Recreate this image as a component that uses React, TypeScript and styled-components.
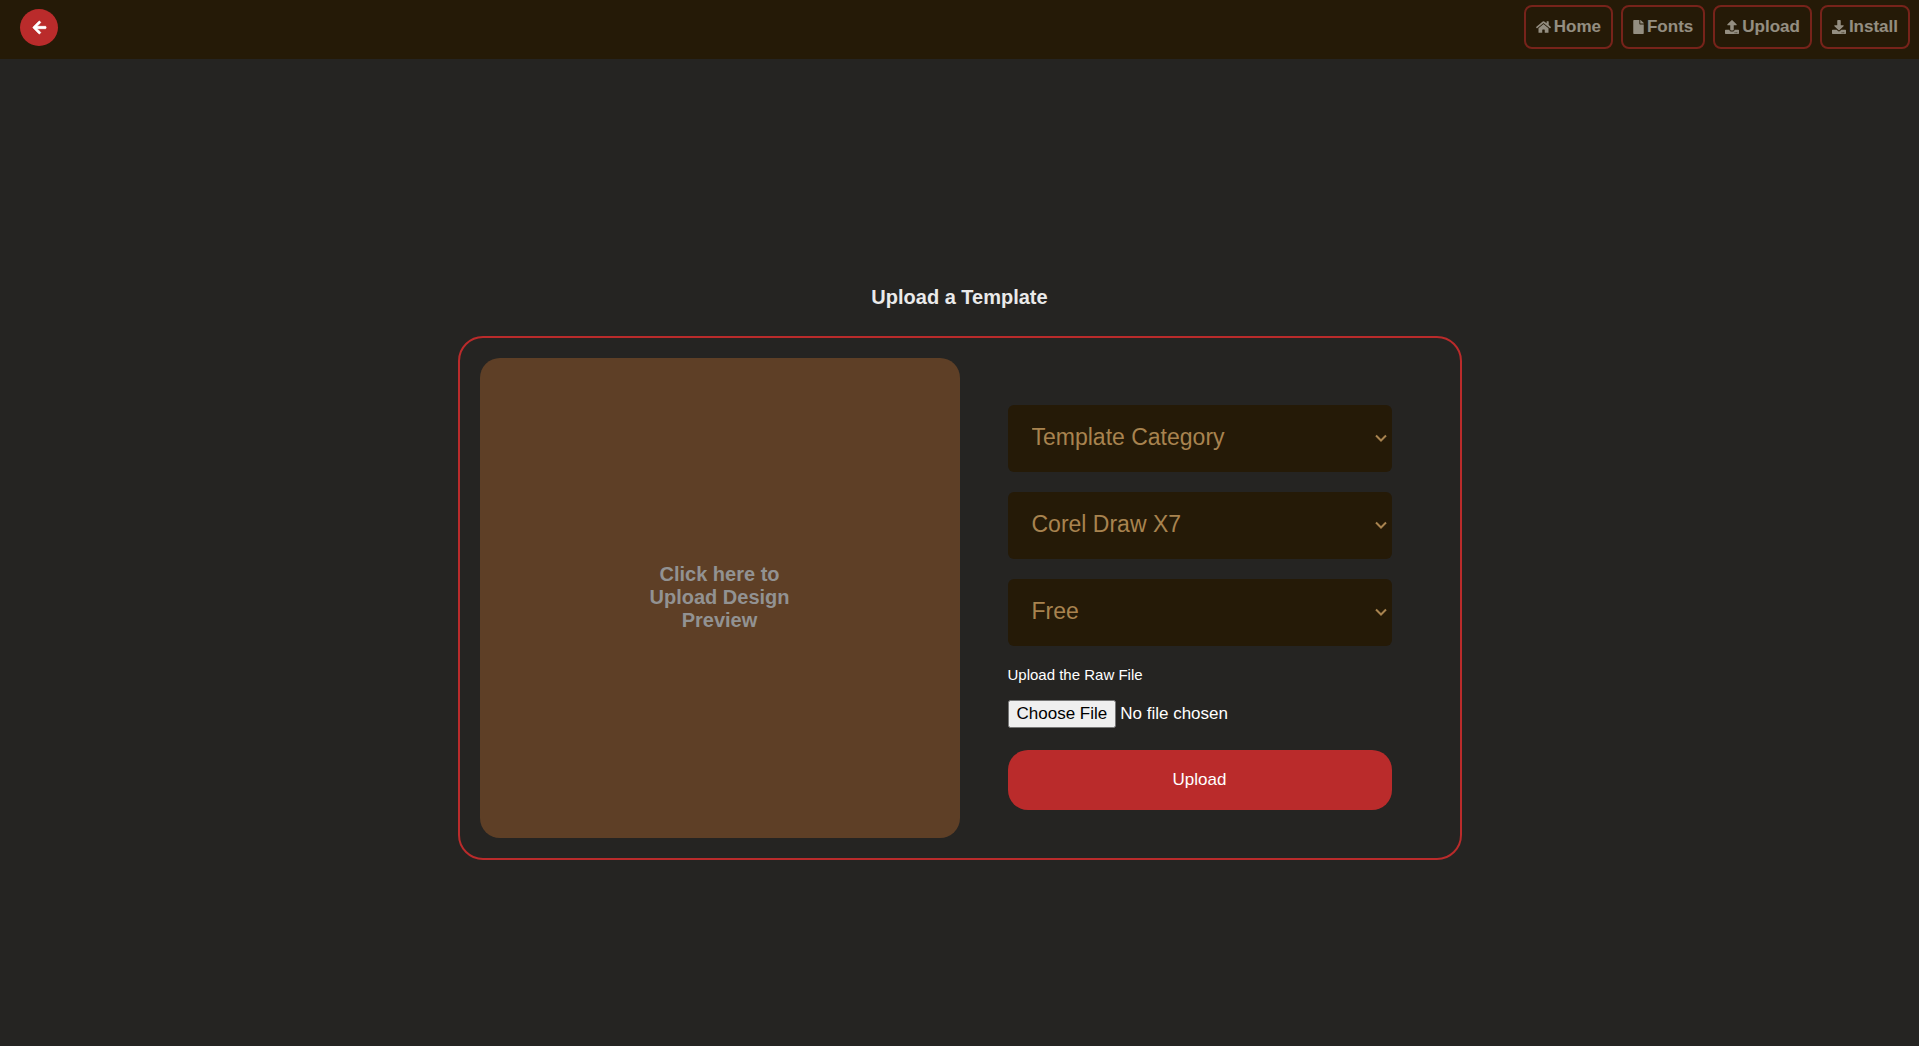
import React from 'react';
import styled, { createGlobalStyle } from 'styled-components';
import { FaArrowLeft, FaDownload, FaFile, FaHome, FaUpload } from 'react-icons/fa';

const color = {
  page: '#252422',
  dark: '#251a07',
  red: '#ba2b2b',
  brown: '#5e3f26',
  tan: '#a8834f',
};

const GlobalStyle = createGlobalStyle`
  * { box-sizing: border-box; }
  body {
    margin: 0;
    background: ${color.page};
    color: #fff;
    font-family: "Liberation Sans", Arial, sans-serif;
    font-size: 17px;
  }
  button, input, select { font-family: inherit; }
`;

const Page = styled.div`
  display: flex;
  flex-direction: column;
  min-height: 100vh;
`;

const Header = styled.header`
  display: flex;
  justify-content: space-between;
  align-items: flex-start;
  padding: 5px 9px 10px 20px;
  background: ${color.dark};
`;

const BackButton = styled.button`
  display: flex;
  align-items: center;
  justify-content: center;
  width: 38px;
  height: 37px;
  margin-top: 4px;
  padding: 0;
  border: 0;
  border-radius: 50%;
  background: ${color.red};
  color: #fff;
  font-size: 15px;
  cursor: pointer;

  svg {
    overflow: visible;
    stroke: currentColor;
    stroke-width: 24px;
  }
`;

const Nav = styled.nav`
  display: flex;
  gap: 8px;
`;

const NavLink = styled.a<{ $iconWidth: number }>`
  display: flex;
  align-items: center;
  gap: 3px;
  height: 44px;
  padding: 0 10px;
  border: 2px solid ${color.red};
  border-radius: 8px;
  color: #efede5;
  font-size: 17px;
  font-weight: bold;
  text-decoration: none;
  opacity: 0.55;

  svg {
    flex: none;
    width: ${({ $iconWidth }) => $iconWidth}px;
    height: 14px;
  }
`;

const Main = styled.main`
  flex: 1;
  display: flex;
  flex-direction: column;
  align-items: center;
  justify-content: center;
  padding: 40px 20px 0;
`;

const Title = styled.h1`
  margin: 0 0 26px;
  color: #eaeaea;
  font-size: 20px;
  line-height: 25px;
`;

const Card = styled.form`
  display: grid;
  grid-template-columns: 1fr 1fr;
  width: 100%;
  max-width: 1004px;
  padding: 20px;
  border: 2px solid ${color.red};
  border-radius: 25px;
`;

const Preview = styled.button`
  display: flex;
  align-items: center;
  justify-content: center;
  aspect-ratio: 1;
  padding: 0 0 2px;
  border: 0;
  border-radius: 20px;
  background: ${color.brown};
  color: #929292;
  font-size: 20px;
  font-weight: bold;
  line-height: 23px;
  cursor: pointer;
`;

const PreviewText = styled.span`
  max-width: 160px;
`;

const Fields = styled.div`
  display: flex;
  flex-direction: column;
  justify-content: center;
  gap: 20px;
  padding: 18px 48px 0;
`;

const SelectBox = styled.div`
  position: relative;
`;

const Select = styled.select`
  display: block;
  appearance: none;
  width: 100%;
  height: 67px;
  padding: 0 24px 2px;
  border: 0;
  border-radius: 6px;
  background: ${color.dark};
  color: ${color.tan};
  font-size: 23px;
`;

const Chevron = styled.svg`
  position: absolute;
  top: 50%;
  right: 5px;
  width: 12px;
  height: 8px;
  margin-top: -4px;
  fill: none;
  stroke: ${color.tan};
  stroke-width: 2;
  pointer-events: none;
`;

const FileField = styled.div`
  display: flex;
  flex-direction: column;
  gap: 16px;
`;

const FileLabel = styled.label`
  font-size: 15px;
  line-height: 18px;
`;

const FileInput = styled.input`
  width: 100%;
  height: 30px;
  font-size: 17px;

  &::file-selector-button {
    padding: 2px 7px;
  }
`;

const SubmitButton = styled.button`
  height: 60px;
  border: 0;
  border-radius: 20px;
  background: ${color.red};
  color: #fff;
  font-size: 17px;
  cursor: pointer;
`;

const links = [
  { label: 'Home', Icon: FaHome, iconWidth: 15 },
  { label: 'Fonts', Icon: FaFile, iconWidth: 11 },
  { label: 'Upload', Icon: FaUpload, iconWidth: 14 },
  { label: 'Install', Icon: FaDownload, iconWidth: 14 },
];

const selects = [
  { name: 'category', label: 'Category', value: 'Template Category' },
  { name: 'version', label: 'Software version', value: 'Corel Draw X7' },
  { name: 'price', label: 'Price', value: 'Free' },
];

export default function App() {
  return (
    <Page>
      <GlobalStyle />
      <Header>
        <BackButton type="button" aria-label="Back">
          <FaArrowLeft />
        </BackButton>
        <Nav>
          {links.map(({ label, Icon, iconWidth }) => (
            <NavLink key={label} href={`#${label.toLowerCase()}`} $iconWidth={iconWidth}>
              <Icon />
              {label}
            </NavLink>
          ))}
        </Nav>
      </Header>
      <Main>
        <Title>Upload a Template</Title>
        <Card onSubmit={(event) => event.preventDefault()}>
          <Preview type="button">
            <PreviewText>Click here to Upload Design Preview</PreviewText>
          </Preview>
          <Fields>
            {selects.map(({ name, label, value }) => (
              <SelectBox key={name}>
                <Select name={name} aria-label={label}>
                  <option>{value}</option>
                </Select>
                <Chevron viewBox="0 0 12 8" aria-hidden="true">
                  <path d="M1 1.5 6 6.5 11 1.5" />
                </Chevron>
              </SelectBox>
            ))}
            <FileField>
              <FileLabel htmlFor="raw-file">Upload the Raw File</FileLabel>
              <FileInput id="raw-file" type="file" />
            </FileField>
            <SubmitButton type="submit">Upload</SubmitButton>
          </Fields>
        </Card>
      </Main>
    </Page>
  );
}
